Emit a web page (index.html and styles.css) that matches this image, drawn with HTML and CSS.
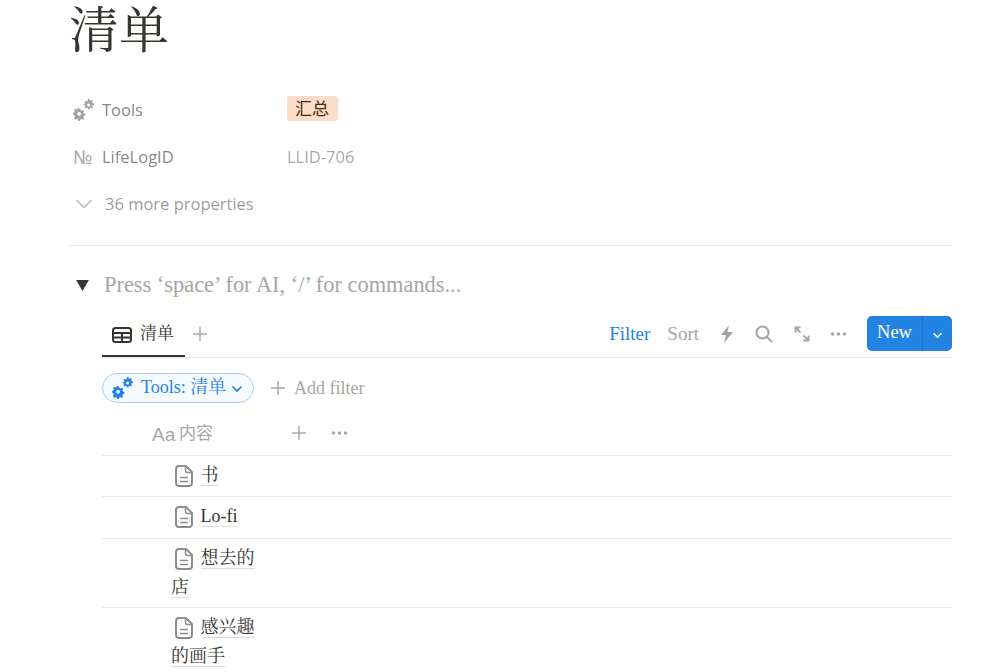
FILE: index.html
```html
<!DOCTYPE html>
<html lang="zh">
<head>
<meta charset="utf-8">
<title>清单</title>
<link rel="stylesheet" href="styles.css">
</head>
<body>
<main class="page">
  <h1 class="title">清单</h1>
  <section class="props">
    <div class="prop">
      <div class="prop-name">
        <svg class="prop-icon" viewBox="0 0 22 22"><use href="#gears"/></svg>
        <span>Tools</span>
      </div>
      <span class="tag">汇总</span>
    </div>
    <div class="prop">
      <div class="prop-name">
        <span class="numero">№</span>
        <span>LifeLogID</span>
      </div>
      <span class="prop-value">LLID-706</span>
    </div>
    <div class="prop more">
      <svg class="more-icon" viewBox="0 0 20 12"><path d="M1.500 1.500 10 10l8.500-8.500"/></svg>
      <span>36 more properties</span>
    </div>
  </section>
  <hr class="divider">
  <div class="toggle">
    <svg class="toggle-icon" viewBox="0 0 14 12"><path d="M0 0h14L7 12z"/></svg>
    <span class="placeholder">Press ‘space’ for AI, ‘/’ for commands...</span>
  </div>
  <section class="db">
    <div class="tabs">
      <div class="tab">
        <svg class="tab-icon" viewBox="0 0 20 16"><rect x="1" y="1" width="18" height="14" rx="2.500"/><path d="M1 6h18M1 10.500h18M10 6v9"/></svg>
        <span>清单</span>
      </div>
      <svg class="plus tab-plus" viewBox="0 0 16 16"><path d="M8 1v14M1 8h14"/></svg>
      <div class="actions">
        <span class="act-filter">Filter</span>
        <span class="act-sort">Sort</span>
        <svg class="act-icon" viewBox="0 0 16 18"><path d="M10 0 2 10h5l-2 8 9-11H8.500z"/></svg>
        <svg class="act-icon stroke" viewBox="0 0 18 18"><circle cx="7.500" cy="7.500" r="6"/><path d="m12 12 5 5"/></svg>
        <svg class="act-icon stroke thin" viewBox="0 0 16 16"><path d="M1.500 6.500v-5h5M1.500 1.500l5 5M14.500 9.500v5h-5M14.500 14.500l-5-5"/></svg>
        <svg class="act-dots" viewBox="0 0 16 4"><circle cx="2" cy="2" r="1.700"/><circle cx="8" cy="2" r="1.700"/><circle cx="14" cy="2" r="1.700"/></svg>
        <div class="new-btn">
          <span class="new-label">New</span>
          <span class="new-arrow"><svg viewBox="0 0 12 8"><path d="m1.500 1.500 4.500 4.500 4.500-4.500"/></svg></span>
        </div>
      </div>
    </div>
    <div class="filters">
      <div class="pill">
        <svg class="pill-icon" viewBox="0 0 22 22"><use href="#gears"/></svg>
        <span class="pill-text">Tools: 清单</span>
        <svg class="pill-arrow" viewBox="0 0 12 8"><path d="m1.500 1.500 4.500 4.500 4.500-4.500"/></svg>
      </div>
      <div class="add-filter">
        <svg class="plus" viewBox="0 0 16 16"><path d="M8 1v14M1 8h14"/></svg>
        <span>Add filter</span>
      </div>
    </div>
    <div class="head">
      <span class="aa">Aa</span>
      <span class="head-name">内容</span>
      <svg class="plus head-plus" viewBox="0 0 16 16"><path d="M8 1v14M1 8h14"/></svg>
      <svg class="act-dots head-dots" viewBox="0 0 16 4"><circle cx="2" cy="2" r="1.700"/><circle cx="8" cy="2" r="1.700"/><circle cx="14" cy="2" r="1.700"/></svg>
    </div>
    <div class="row"><div class="cell"><svg class="doc" viewBox="0 0 18 22"><use href="#doc"/></svg><span class="link">书</span></div></div>
    <div class="row"><div class="cell"><svg class="doc" viewBox="0 0 18 22"><use href="#doc"/></svg><span class="link">Lo-fi</span></div></div>
    <div class="row"><div class="cell"><svg class="doc" viewBox="0 0 18 22"><use href="#doc"/></svg><span class="link">想去的店</span></div></div>
    <div class="row"><div class="cell"><svg class="doc" viewBox="0 0 18 22"><use href="#doc"/></svg><span class="link">感兴趣的画手</span></div></div>
  </section>
</main>
<svg class="defs" aria-hidden="true">
  <defs>
    <g id="gears" fill="currentColor" fill-rule="evenodd">
      <path d="M6 10.500l1 0 .4 1.500 1.300.5 1.300-.8 1.200 1.200-.8 1.300.5 1.300 1.500.4v1.800l-1.500.4-.5 1.300.8 1.300-1.200 1.200-1.300-.8-1.300.5-.4 1.400H5.200l-.4-1.400-1.300-.5-1.300.8L1 19.700l.8-1.300-.5-1.300L0 16.700v-1.800l1.300-.4.5-1.300-.8-1.300 1.200-1.200 1.300.8 1.300-.5.4-1.500zM6.100 13.900a1.900 1.900 0 1 0 0 3.800 1.900 1.900 0 0 0 0-3.800z" transform="translate(0 -1)"/>
      <path d="M15 0h1.400l.3 1.300 1.100.4 1.100-.7 1 1-.7 1.100.4 1.100 1.400.3v1.400l-1.400.3-.4 1.100.7 1.100-1 1-1.100-.7-1.100.4-.3 1.300H15l-.3-1.300-1.100-.4-1.100.7-1-1 .7-1.100-.4-1.100-1.300-.3V5.300l1.300-.3.4-1.100-.7-1.100 1-1 1.100.7 1.100-.4zM15.700 4.400a1.600 1.600 0 1 0 0 3.200 1.600 1.600 0 0 0 0-3.200z"/>
    </g>
    <g id="doc" fill="none" stroke="currentColor">
      <path stroke-width="2" d="M4 1h7l6 6v11a3 3 0 0 1-3 3H4a3 3 0 0 1-3-3V4a3 3 0 0 1 3-3z"/>
      <path stroke-width="1.500" d="M10.500 1.500V6a2 2 0 0 0 2 2h4M5 13h8M5 17h8" transform="translate(0 -.5)"/>
    </g>
  </defs>
</svg>
</body>
</html>
```
FILE: styles.css
```css
* { box-sizing: border-box; }
html, body { margin: 0; height: 100%; overflow: hidden; background: #fff; }
body { font-family: "Liberation Serif", "Noto Serif CJK SC", "Noto Sans CJK SC", serif; color: #37352f; }
.defs { width: 0; height: 0; display: block; }
.page { width: 884px; margin-left: 68px; }

.title { margin: 0; padding-left: 1px; height: 86px; font-size: 50px; font-weight: 400; line-height: 62px; color: #37352f; }

.props { font-family: "Open Sans", "Noto Sans CJK SC", sans-serif; font-size: 16.500px; display: flex; flex-direction: column; }
.prop { height: 47px; display: flex; align-items: center; }
.prop-name { width: 219px; display: flex; align-items: center; color: rgba(55,53,47,.62); padding-left: 5px; }
.prop-icon { width: 22px; height: 22px; color: #a5a4a1; margin-right: 7px; }
.numero { width: 22px; margin-right: 7px; font-size: 19px; color: #a5a4a1; }
.prop-value { color: rgba(55,53,47,.45); }
.tag { background: #fadec9; border-radius: 3px; margin-top: -2px; padding: 0 8px; width: 51px; height: 25px; line-height: 25px; font-size: 17px; color: #49290e; }
.more { color: rgba(55,53,47,.5); padding-left: 7px; }
.more-icon { width: 18px; height: 12px; fill: none; stroke: #b5b4b1; stroke-width: 1.600; margin-right: 12px; }

.divider { border: 0; border-top: 1px solid #e9e9e7; margin: 18px 0 0; }
.toggle { height: 70px; display: flex; align-items: flex-start; padding: 26px 0 0 8px; font-size: 22.400px; }
.toggle-icon { width: 13px; height: 11px; margin: 8px 15px 0 0; fill: #37352f; }
.placeholder { color: #a8a6a2; line-height: 26px; white-space: nowrap; }

.db { margin-left: 34px; }
.tabs { height: 42px; display: flex; align-items: flex-start; border-bottom: 1px solid #e9e9e7; }
.tab { width: 83px; height: 41px; display: flex; align-items: flex-start; border-bottom: 2px solid #37352f; padding: 8px 0 0 10px; font-size: 17px; line-height: 20px; }
.tab-icon { width: 20px; height: 16px; fill: none; stroke: #37352f; stroke-width: 2; margin: 3px 8px 0 0; }
.plus { width: 16px; height: 16px; fill: none; stroke: #a9a8a5; stroke-width: 1.500; }
.tab-plus { margin: 10px 0 0 7px; }
.actions { margin-left: auto; display: flex; align-items: center; height: 35px; font-size: 19px; }
.act-filter { color: #2383e2; margin-right: 17px; }
.act-sort { color: #a8a6a2; margin-right: 20px; }
.act-icon { width: 16px; height: 18px; fill: #a5a4a1; margin-right: 20px; }
.act-icon.stroke { width: 18px; height: 18px; fill: none; stroke: #a5a4a1; stroke-width: 2; margin-right: 21px; }
.act-icon.thin { width: 16px; height: 16px; stroke-width: 1.800; margin-right: 20px; }
.act-dots { width: 17px; height: 4px; fill: #a5a4a1; margin-right: 20px; }
.new-btn { width: 85px; height: 35px; background: #2383e2; border-radius: 5px; color: #fff; display: flex; align-items: stretch; }
.new-label { width: 56px; text-align: center; line-height: 33px; font-size: 18.500px; border-right: 1px solid #1d70c2; flex: none; }
.new-arrow { flex: 1; display: flex; align-items: center; justify-content: center; }
.new-arrow svg { width: 11px; height: 7px; fill: none; stroke: #fff; stroke-width: 1.700; margin-top: 3px; }

.filters { display: flex; align-items: center; height: 30px; margin-top: 15px; }
.pill { width: 152px; height: 30px; border: 1px solid #a9d0f5; border-radius: 15px; background: #f5faff; color: #2383e2; display: flex; align-items: center; padding-left: 9px; font-size: 18px; }
.pill-icon { width: 22px; height: 22px; color: #2383e2; margin-right: 7px; }
.pill-text { white-space: nowrap; padding-bottom: 3px; line-height: 24px; }
.pill-arrow { width: 12px; height: 8px; fill: none; stroke: #2383e2; stroke-width: 1.700; margin: 1px 0 0 5px; }
.add-filter { display: flex; align-items: center; margin-left: 16px; color: #a8a6a2; font-size: 18px; }
.add-filter .plus { margin-right: 8px; }

.head { height: 53px; display: flex; align-items: center; border-bottom: 1px solid #e9e9e7; padding: 8px 0 0 50px; color: #a8a6a2; }
.aa { font-family: "Liberation Sans", sans-serif; font-size: 19px; width: 27px; padding-top: 3px; }
.head-name { font-family: "Noto Sans CJK SC", sans-serif; font-size: 17px; width: 112px; padding-bottom: 3px; }
.head-dots { margin: 0 0 0 24px; }

.row { border-bottom: 1px solid #e9e9e7; padding: 5px 0; min-height: 41.400px; }
.cell { width: 156px; padding-left: 69px; font-size: 18px; line-height: 29px; color: #37352f; }
.doc { width: 18px; height: 22px; color: #8f8e8b; vertical-align: -6px; margin: 0 7.500px 0 4px; }
.link { border-bottom: 1px solid #dcdcda; }
```
